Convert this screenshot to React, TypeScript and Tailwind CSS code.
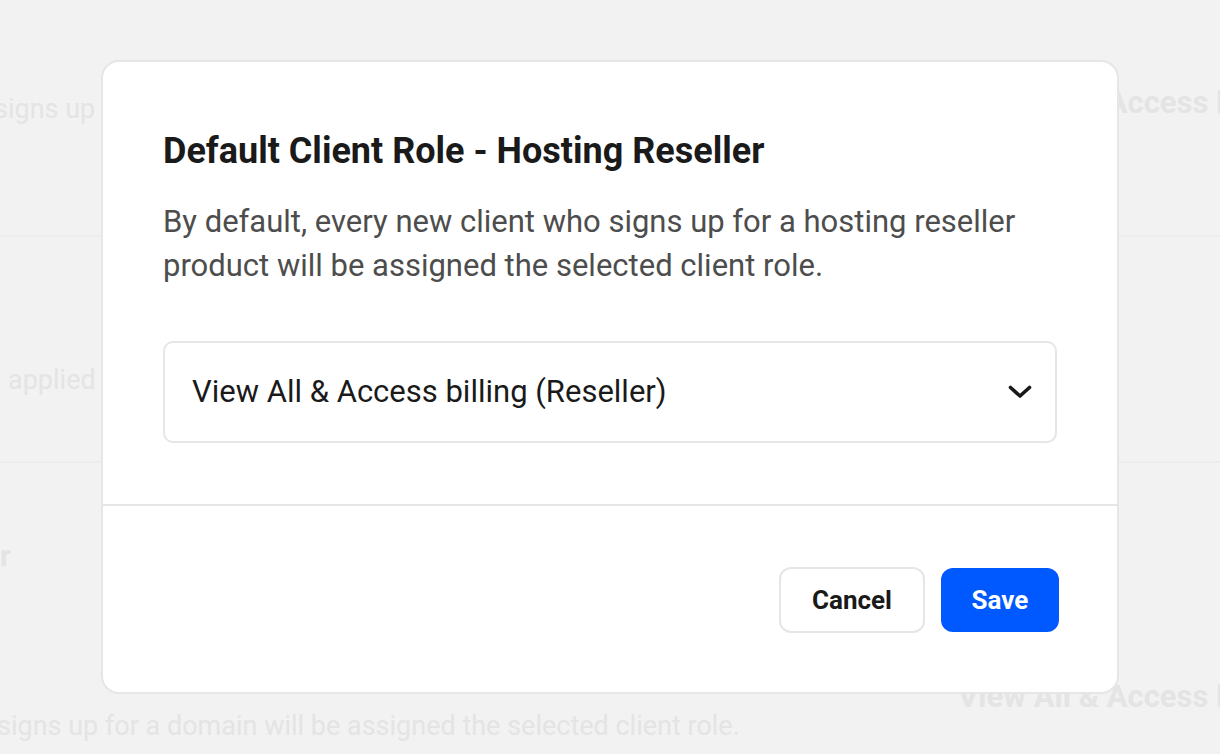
import React from "react";

function Chevron() {
  return (
    <svg width="24" height="14" viewBox="0 0 24 14" fill="none" aria-hidden>
      <path
        d="M2.5 2.5 12 11 21.5 2.5"
        stroke="#1a1a1a"
        strokeWidth="3.6"
        strokeLinecap="round"
        strokeLinejoin="round"
      />
    </svg>
  );
}

function Backdrop() {
  return (
    <div className="flex flex-col text-[#e4e4e4] whitespace-nowrap">
      <div className="h-[237px] border-b-2 border-[#ececec] flex">
        <div className="w-[964px] shrink-0 pt-[89px] -ml-[6px]">
          <p className="text-[27px] leading-[40px]">
            signs up for a hosting reseller product will be assigned
          </p>
        </div>
        <div className="shrink-0 pt-[83px]">
          <p className="text-[31px] leading-[40px] font-bold">
            View All &amp; Access billing (Reseller)
          </p>
        </div>
      </div>
      <div className="h-[226px] border-b-2 border-[#ececec] pt-[123px] pl-[8px]">
        <p className="text-[27px] leading-[40px]">applied to every client</p>
      </div>
      <div className="flex">
        <div className="w-[958px] shrink-0">
          <div className="flex w-[11px] justify-end pt-[73px]">
            <p className="text-[30px] leading-[40px] font-bold">Default Client Role - Registrar</p>
          </div>
          <p className="mt-[130px] -ml-[3px] text-[27px] leading-[40px]">
            signs up for a domain will be assigned the selected client role.
          </p>
        </div>
        <div className="shrink-0 pt-[214px]">
          <p className="text-[31px] leading-[40px] font-bold">
            View All &amp; Access billing (Reseller)
          </p>
        </div>
      </div>
    </div>
  );
}

export default function App() {
  return (
    <div className="relative h-screen w-full overflow-hidden bg-[#f2f2f2] font-['Roboto',sans-serif]">
      <Backdrop />

      <div className="absolute inset-0 flex items-center justify-center">
        <div className="w-[1018px] rounded-[18px] border-2 border-[#e6e6e6] bg-white">
          <div className="px-[60px] pt-[67px] pb-[61px]">
            <h2 className="text-[36px] leading-[44px] font-bold text-[#1a1a1a]">
              Default Client Role - Hosting Reseller
            </h2>
            <p className="mt-[27px] text-[31px] leading-[44px] text-[#4d4d4d]">
              By default, every new client who signs up for a hosting reseller
              product will be assigned the selected client role.
            </p>
            <button
              type="button"
              className="mt-[53px] flex h-[102px] w-full items-center justify-between rounded-[10px] border-2 border-[#e6e6e6] bg-white pl-[27px] pr-[23px] text-left"
            >
              <span className="text-[31px] text-[#1a1a1a]">
                View All &amp; Access billing (Reseller)
              </span>
              <Chevron />
            </button>
          </div>

          <div className="flex items-center justify-end gap-4 border-t-2 border-[#e6e6e6] pl-[60px] pr-[58px] pt-[61px] pb-[59px]">
            <button
              type="button"
              className="h-[66px] w-[146px] rounded-[12px] border-2 border-[#e6e6e6] bg-white text-[26px] font-bold text-[#1a1a1a]"
            >
              Cancel
            </button>
            <button
              type="button"
              className="h-[64px] w-[118px] rounded-[12px] bg-[#0059ff] text-[26px] font-bold text-white"
            >
              Save
            </button>
          </div>
        </div>
      </div>
    </div>
  );
}
